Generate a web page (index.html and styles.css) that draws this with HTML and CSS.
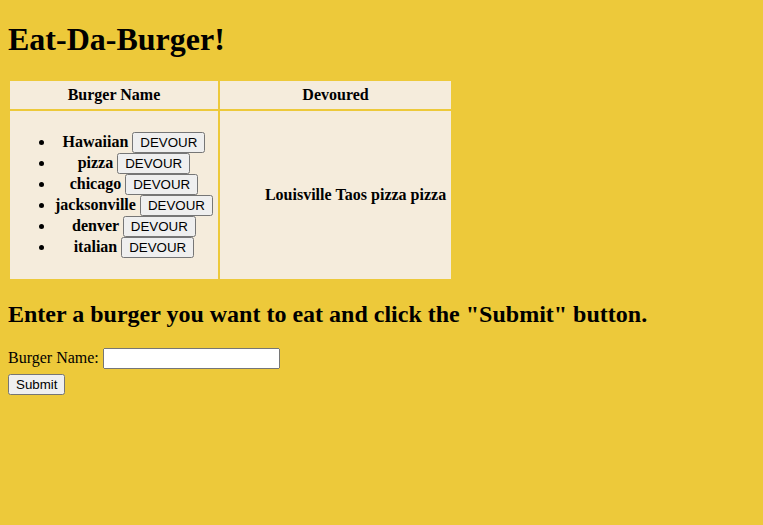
FILE: index.html
```html
<!DOCTYPE html>
<html>
<head>
<meta charset="utf-8">
<title>Eat-Da-Burger!</title>
<link rel="stylesheet" href="styles.css">
</head>
<body>
<h1>Eat-Da-Burger!</h1>
<table class="burgers">
  <tr>
    <th>Burger Name</th>
    <th>Devoured</th>
  </tr>
  <tr>
    <th class="col-list">
      <ul>
        <li>Hawaiian <button class="btn">DEVOUR</button></li>
        <li>pizza <button class="btn">DEVOUR</button></li>
        <li>chicago <button class="btn">DEVOUR</button></li>
        <li>jacksonville <button class="btn">DEVOUR</button></li>
        <li>denver <button class="btn">DEVOUR</button></li>
        <li>italian <button class="btn">DEVOUR</button></li>
      </ul>
    </th>
    <th class="col-eaten">
      <ul class="eaten">
        <li>Louisville</li>
        <li>Taos</li>
        <li>pizza</li>
        <li>pizza</li>
      </ul>
    </th>
  </tr>
</table>
<h2>Enter a burger you want to eat and click the "Submit" button.</h2>
<form class="form">
  <div class="field"><label>Burger Name: <input type="text" class="input"></label></div>
  <button type="submit" class="btn submit">Submit</button>
</form>
</body>
</html>
```
FILE: styles.css
```css
html, body {
  background: #edc93a;
}
body {
  margin: 8px;
  font-family: "Liberation Serif", "Times New Roman", serif;
  color: #000;
}
h1 {
  font-size: 32px;
  margin: 13px 0 21px;
}
h2 {
  font-size: 24px;
  margin: 20px 0;
}
.burgers {
  border-spacing: 2px;
}
.burgers th {
  background: #f5ecdc;
  padding: 5px;
  font-size: 16px;
}
.eaten li {
  display: inline;
  list-style: none;
}
.btn {
  font-family: "Liberation Sans", Arial, sans-serif;
  font-size: 13.33px;
}
.input {
  width: 169px;
  box-sizing: border-box;
  width: 177px;
  height: 21px;
}
.submit {
  margin-top: 5px;
}
```
